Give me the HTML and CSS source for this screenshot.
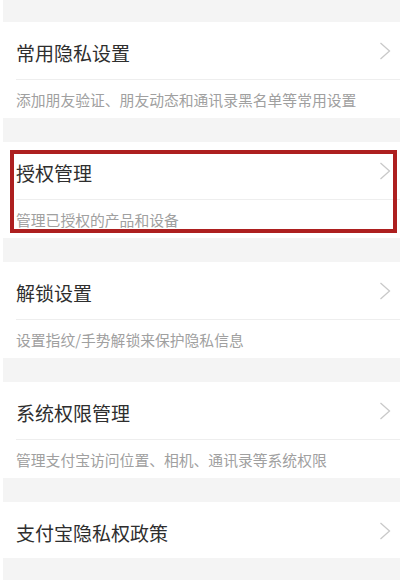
FILE: index.html
```html
<!DOCTYPE html>
<html lang="zh-CN">
<head>
<meta charset="utf-8">
<link rel="stylesheet" href="styles.css">
</head>
<body>
<div class="page">
  <div class="gap gap-top"></div>
  <div class="card">
    <div class="row">
      <span class="title">常用隐私设置</span>
      <svg class="chev" viewBox="0 0 12 18" width="12" height="18"><path d="M1.5 1 L10.5 9 L1.5 17" fill="none" stroke="#c9c9c9" stroke-width="1.3"/></svg>
    </div>
    <div class="sub">添加朋友验证、朋友动态和通讯录黑名单等常用设置</div>
  </div>
  <div class="gap"></div>
  <div class="card">
    <div class="row">
      <span class="title">授权管理</span>
      <svg class="chev" viewBox="0 0 12 18" width="12" height="18"><path d="M1.5 1 L10.5 9 L1.5 17" fill="none" stroke="#c9c9c9" stroke-width="1.3"/></svg>
    </div>
    <div class="sub">管理已授权的产品和设备</div>
    <div class="mark"></div>
  </div>
  <div class="gap"></div>
  <div class="card">
    <div class="row">
      <span class="title">解锁设置</span>
      <svg class="chev" viewBox="0 0 12 18" width="12" height="18"><path d="M1.5 1 L10.5 9 L1.5 17" fill="none" stroke="#c9c9c9" stroke-width="1.3"/></svg>
    </div>
    <div class="sub">设置指纹/手势解锁来保护隐私信息</div>
  </div>
  <div class="gap"></div>
  <div class="card">
    <div class="row">
      <span class="title">系统权限管理</span>
      <svg class="chev" viewBox="0 0 12 18" width="12" height="18"><path d="M1.5 1 L10.5 9 L1.5 17" fill="none" stroke="#c9c9c9" stroke-width="1.3"/></svg>
    </div>
    <div class="sub">管理支付宝访问位置、相机、通讯录等系统权限</div>
  </div>
  <div class="gap"></div>
  <div class="card">
    <div class="row single">
      <span class="title">支付宝隐私权政策</span>
      <svg class="chev" viewBox="0 0 12 18" width="12" height="18"><path d="M1.5 1 L10.5 9 L1.5 17" fill="none" stroke="#c9c9c9" stroke-width="1.3"/></svg>
    </div>
  </div>
  <div class="gap gap-bottom"></div>
</div>
</body>
</html>
```
FILE: styles.css
```css
html, body {
  margin: 0;
  padding: 0;
  background: #ffffff;
}
.page {
  width: 400px;
  height: 580px;
  overflow: hidden;
  display: flex;
  flex-direction: column;
  font-family: "Noto Sans CJK SC", "Noto Sans", sans-serif;
}
.gap {
  height: 24px;
  margin-left: 3px;
  background: #f4f4f4;
  flex: none;
}
.gap-top {
  height: 22px;
}
.gap-bottom {
  flex: 1;
}
.card {
  position: relative;
  background: #ffffff;
  flex: none;
}
.row {
  height: 57px;
  display: flex;
  align-items: center;
  justify-content: space-between;
  margin-left: 16px;
  padding-right: 9px;
  border-bottom: 1px solid #eeeeee;
}
.row.single {
  height: 56px;
  border-bottom: none;
}
.title {
  font-size: 19px;
  color: #2e2e2e;
  line-height: 1;
  padding-top: 4px;
}
.chev {
  display: block;
  margin-top: 1px;
}
.sub {
  height: 38px;
  display: flex;
  align-items: center;
  padding: 2px 0 0 16px;
  box-sizing: border-box;
  font-size: 14.8px;
  color: #a0a0a0;
  line-height: 1;
}
.mark {
  position: absolute;
  left: 10px;
  top: 8px;
  width: 379px;
  height: 75px;
  border: 4px solid #ad1f1f;
  pointer-events: none;
}
```
